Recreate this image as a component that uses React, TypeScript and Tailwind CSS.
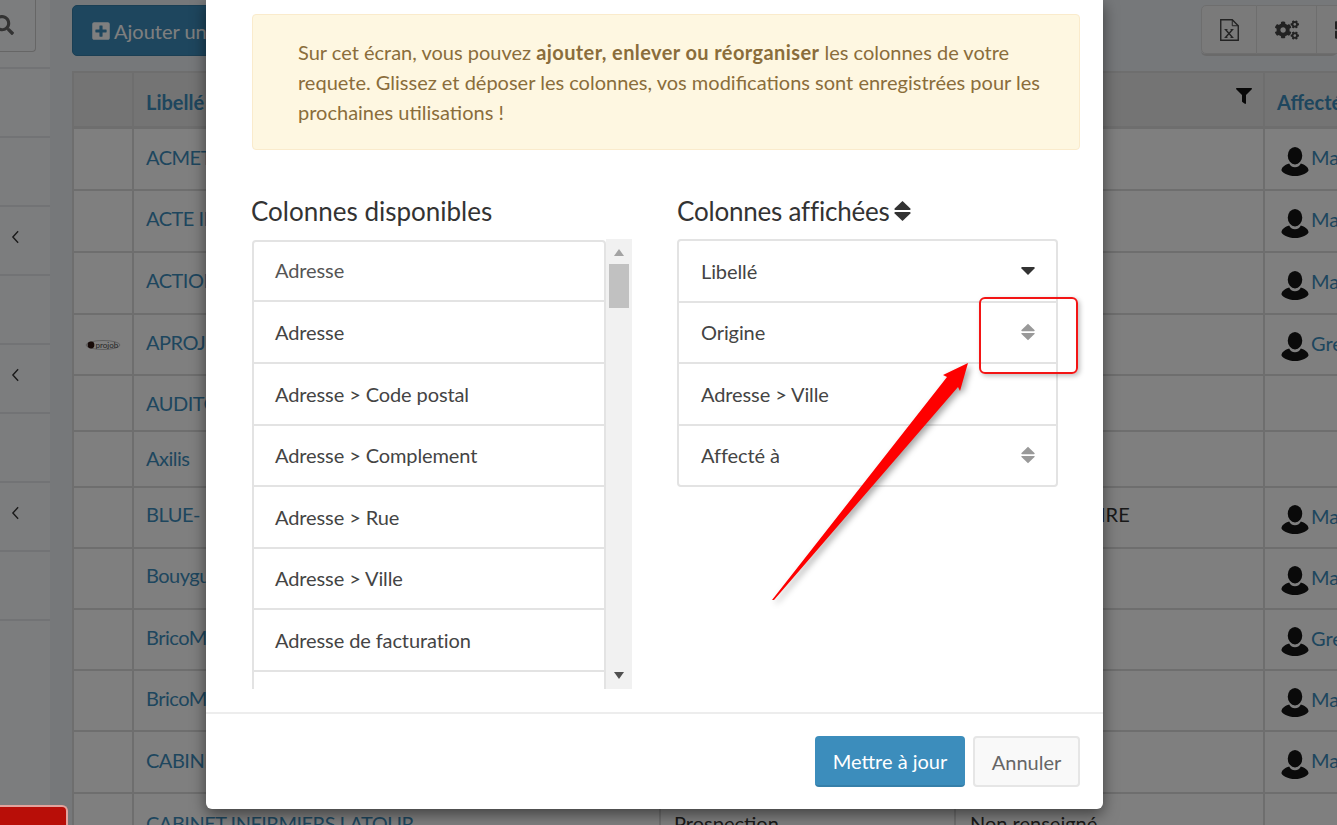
import React from 'react';
import { FaPlusSquare, FaCogs, FaFilter, FaSearch, FaThLarge } from 'react-icons/fa';

interface Row {
  name: string;
  user?: string;
  h: string;
  pad: string;
  logo?: boolean;
  extra?: string;
}

const rows: Row[] = [
  { name: 'ACMET', user: 'Ma', h: 'h-[62px]', pad: 'pb-[4px]' },
  { name: 'ACTE IN', user: 'Ma', h: 'h-[62px]', pad: 'pb-[6px]' },
  { name: 'ACTION', user: 'Ma', h: 'h-[62px]', pad: 'pb-[6px]' },
  { name: 'APROJ', user: 'Gre', h: 'h-[61px]', pad: 'pb-[6px]', logo: true },
  { name: 'AUDITO', h: 'h-[56px]', pad: 'pb-0' },
  { name: 'Axilis', h: 'h-[56px]', pad: 'pb-[2px]' },
  { name: 'BLUE- I', user: 'Ma', h: 'h-[61px]', pad: 'pb-[8px]', extra: 'IRE' },
  { name: 'Bouygu', user: 'Ma', h: 'h-[61px]', pad: 'pb-[8px]' },
  { name: 'BricoM', user: 'Gre', h: 'h-[61px]', pad: 'pb-[6px]' },
  { name: 'BricoM', user: 'Ma', h: 'h-[61px]', pad: 'pb-[6px]' },
  { name: 'CABINE', user: 'Ma', h: 'h-[62px]', pad: 'pb-[4px]' },
];

const available = [
  { label: 'Adresse', cls: 'h-[62px] pb-[2px] rounded-t border-t-2 text-[#555]' },
  { label: 'Adresse', cls: 'h-[62px]' },
  { label: 'Adresse > Code postal', cls: 'h-[61.5px]' },
  { label: 'Adresse > Complement', cls: 'h-[61.5px]' },
  { label: 'Adresse > Rue', cls: 'h-[61.5px]' },
  { label: 'Adresse > Ville', cls: 'h-[61.5px]' },
  { label: 'Adresse de facturation', cls: 'h-[61.5px]' },
  { label: '', cls: 'h-[61.5px]' },
];

const displayed = [
  { label: 'Libellé', icon: 'down' },
  { label: 'Origine', icon: 'sort' },
  { label: 'Adresse > Ville', icon: '' },
  { label: 'Affecté à', icon: 'sort' },
];

const UserIcon = () => (
  <svg viewBox="0 0 28 30" className="w-[28px] h-[29px] shrink-0 text-[#141414]" fill="currentColor">
    <ellipse cx="14" cy="9" rx="7.5" ry="9" />
    <path d="M8 17c1 2 3 4 6 4s5-2 6-4c4 1 8 4 8 7 0 2-7 6-14 6S0 26 0 24c0-3 4-6 8-7z" />
  </svg>
);

const SortIcon = ({ className }: { className: string }) => (
  <svg viewBox="0 0 16 20" className={className} fill="currentColor">
    <path d="M8 0.5 15.4 7.6c.5.6.2 1.4-.7 1.4H1.3C.4 9 .1 8.2.6 7.6z" />
    <path d="M8 19.5.6 12.4C.1 11.8.4 11 1.3 11h13.4c.9 0 1.2.8.7 1.4z" />
  </svg>
);

const ExcelIcon = () => (
  <svg viewBox="0 0 19 22" className="h-[22px] w-[19px]" fill="none" stroke="currentColor">
    <path d="M.75.75h11.5l6 6v14.5H.75z" strokeWidth="1.4" />
    <path d="M12.25.75v6h6" strokeWidth="1" />
    <path d="M5.5 10.5 12.5 18.5M12.5 10.5 5.5 18.5" strokeWidth="1.4" />
    <path d="M4.5 10.5h3M10.5 10.5h3M4.5 18.5h3M10.5 18.5h3" strokeWidth="0.9" />
  </svg>
);

const ThinChevron = () => (
  <svg viewBox="0 0 10 16" className="h-[14px] w-[9px]" fill="none" stroke="#333" strokeWidth="1.6">
    <path d="M8 1.5 2 8l6 6.5" />
  </svg>
);

const Logo = () => (
  <svg viewBox="0 0 36 12" className="w-[36px] h-[12px]">
    <ellipse cx="18" cy="6" rx="17" ry="4.5" fill="none" stroke="#8f8f8f" strokeWidth="0.6" />
    <circle cx="6" cy="6" r="3.4" fill="#2c1410" />
    <text x="10.5" y="8.5" fontSize="8" fill="#4c4c4c" fontFamily="Lato, sans-serif">projob</text>
  </svg>
);

function Background() {
  return (
    <div className="flex h-[825px] w-[1337px] overflow-hidden bg-[#ecf0f5] text-[20px] text-[#333]">
      <div className="w-[50px] shrink-0 bg-[#f9fafc] text-[#444]">
        <div className="h-[68px]">
          <div className="flex h-[53px] w-[36px] items-center overflow-hidden rounded-br border-r border-b border-[#ccc] bg-[#f9fafc] -mt-px">
            <FaSearch className="-ml-[6px] shrink-0 text-[20px] text-[#666]" />
          </div>
        </div>
        {[false, false, true, false, true, false, true, false].map((chev, i) => (
          <div key={i} className="flex h-[69px] items-center justify-center border-t-2 border-[#e4e6ea] pb-[8px] pr-[20px]">
            {chev && <ThinChevron />}
          </div>
        ))}
        <div className="h-[121px] border-t-2 border-[#e4e6ea]" />
      </div>

      <div className="min-w-0 flex-1 pl-[22px] pt-[5px]">
        <div className="flex h-[51px] items-stretch justify-between">
          <button className="flex w-[200px] items-center gap-[3px] rounded-[5px] border border-[#367fa9] bg-[#3c8dbc] pl-[18px] text-[20px] text-white">
            <FaPlusSquare className="text-[20px]" />
            Ajouter un
          </button>
          <div className="flex h-[51px] rounded-[5px] border-b-2 border-[#d5d5d5]">
            <div className="flex w-[56px] items-center justify-center rounded-l-[5px] border border-[#ddd] bg-[#f4f4f4] text-[#444]">
              <ExcelIcon />
            </div>
            <div className="flex w-[60px] items-center justify-center border border-l-0 border-[#ddd] bg-[#f4f4f4] text-[#444]">
              <FaCogs className="text-[24px]" />
            </div>
            <div className="flex w-[20px] items-center justify-start overflow-hidden border-y border-[#ddd] bg-[#f4f4f4] pl-[18px] text-[#444]">
              <FaThLarge className="shrink-0 text-[20px]" />
            </div>
          </div>
        </div>

        <div className="mt-[15px] border-t-2 border-l-2 border-[#ddd] bg-white">
          <div className="flex h-[56px] border-b-[3px] border-[#ddd] bg-[#e8e8e8] font-bold text-[#3c8dbc]">
            <div className="w-[60px] shrink-0 border-r-2 border-[#ddd]" />
            <div className="w-[527px] shrink-0 border-r-2 border-[#ddd] pl-[12px] pt-[14px]">Libellé</div>
            <div className="w-[295px] shrink-0" />
            <div className="flex w-[309px] shrink-0 justify-end border-r-2 border-[#ddd] pr-[11px] pt-[15px]">
              <FaFilter className="text-[16px] text-[#111]" />
            </div>
            <div className="whitespace-nowrap pl-[12px] pt-[14px]">Affecté</div>
          </div>
          {rows.map((row, i) => (
            <div key={i} className={`flex ${row.h} border-b-2 border-[#ddd]`}>
              <div className="flex w-[60px] shrink-0 items-center justify-center border-r-2 border-[#ddd]">
                {row.logo && <Logo />}
              </div>
              <div className={`flex w-[527px] shrink-0 items-center border-r-2 border-[#ddd] ${row.pad} pl-[12px] tracking-[-0.5px] text-[#3c8dbc]`}>{row.name}</div>
              <div className="w-[295px] shrink-0 border-r-2 border-[#ddd]" />
              <div className={`flex w-[309px] shrink-0 items-center border-r-2 border-[#ddd] ${row.pad} pl-[144px]`}>{row.extra}</div>
              <div className="flex items-center gap-[2px] pl-[16px] pt-[4px] text-[#3c8dbc]">
                {row.user && <UserIcon />}
                {row.user && <span className="-mt-[8px]">{row.user}</span>}
              </div>
            </div>
          ))}
          <div className="flex h-[40px]">
            <div className="w-[60px] shrink-0 border-r-2 border-[#ddd]" />
            <div className="w-[527px] shrink-0 whitespace-nowrap border-r-2 border-[#ddd] pl-[12px] pt-[14px] tracking-[-0.5px] text-[#3c8dbc]">CABINET INFIRMIERS LATOUR</div>
            <div className="w-[295px] shrink-0 border-r-2 border-[#ddd] pl-[13px] pt-[14px]">Prospection</div>
            <div className="w-[309px] shrink-0 border-r-2 border-[#ddd] pl-[14px] pt-[14px]">Non renseigné</div>
          </div>
        </div>
      </div>
    </div>
  );
}

function Modal() {
  return (
    <div className="ml-[206px] flex h-[809px] w-[897px] flex-col rounded-b-[6px] bg-white shadow-[0_5px_15px_rgba(0,0,0,0.5)]">
      <div className="flex-1 pl-[46px] pr-[23px] pt-[14px]">
        <div className="h-[136px] rounded border border-[#faebcc] bg-[#fef7e1] pl-[45px] pr-[30px] pt-[22px] text-[20px] leading-[30px] text-[#8a6d3b]">
          Sur cet écran, vous pouvez <b className="tracking-[0.4px]">ajouter, enlever ou réorganiser</b> les colonnes de votre requete. Glissez et déposer les colonnes, vos modifications sont enregistrées pour les prochaines utilisations !
        </div>

        <div className="mt-[43px] flex text-[#444]">
          <div className="w-[425px] shrink-0">
            <h4 className="-ml-px h-[46px] text-[26px] leading-[36px] text-[#333]">Colonnes disponibles</h4>
            <div className="flex h-[450px] w-[380px] overflow-hidden">
              <div className="w-[354px] shrink-0 pt-[1px]">
                {available.map((item, i) => (
                  <div key={i} className={`flex items-center border-x-2 border-b-2 border-[#e3e3e3] pl-[21px] text-[20px] tracking-[-0.1px] ${item.cls}`}>
                    {item.label}
                  </div>
                ))}
              </div>
              <div className="flex h-[450px] w-[26px] shrink-0 flex-col items-center bg-[#f1f1f1]">
                <div className="mt-[10px] h-0 w-0 border-x-[5px] border-b-[7px] border-x-transparent border-b-[#a3a3a3]" />
                <div className="mt-[8px] h-[44px] w-[20px] bg-[#c1c1c1]" />
                <div className="mt-[364px] h-0 w-0 border-x-[5px] border-t-[7px] border-x-transparent border-t-[#505050]" />
              </div>
            </div>
          </div>
          <div className="w-[381px] shrink-0">
            <h4 className="flex h-[46px] items-start gap-[4px] text-[26px] leading-[36px] tracking-[-0.2px] text-[#333]">
              Colonnes affichées
              <SortIcon className="mt-[7px] h-[22px] w-[17px] text-[#333]" />
            </h4>
            <div className="overflow-hidden rounded border-2 border-[#e3e3e3]">
              {displayed.map((item, i) => (
                <div key={i} className={`flex items-center justify-between pl-[22px] pr-[21px] text-[20px] tracking-[-0.1px] ${i < 3 ? 'h-[61.5px] border-b-2 border-[#e3e3e3]' : 'h-[59.5px]'}`}>
                  {item.label}
                  {item.icon === 'down' && (
                    <svg viewBox="0 0 14 8" className="h-[8px] w-[14px] text-[#333]" fill="currentColor">
                      <path d="M7 8 .5 1.4C0 .8.3 0 1.1 0h11.8c.8 0 1.1.8.6 1.4z" />
                    </svg>
                  )}
                  {item.icon === 'sort' && <SortIcon className="h-[18px] w-[14px] text-[#999]" />}
                </div>
              ))}
            </div>
          </div>
        </div>
      </div>
      <div className="flex h-[97px] justify-end gap-[8px] border-t-2 border-[#ededed] pr-[23px] pt-[22px]">
        <button className="h-[51px] w-[150px] rounded border-b-2 border-[#367fa9] bg-[#3c8dbc] text-[20px] text-white">Mettre à jour</button>
        <button className="h-[51px] w-[107px] rounded border-2 border-[#e6e6e6] bg-[#f9f9f9] text-[20px] text-[#666]">Annuler</button>
      </div>
    </div>
  );
}

export default function App() {
  return (
    <div className="relative h-[825px] w-[1337px] overflow-hidden font-['Lato',sans-serif]">
      <Background />
      <div className="absolute inset-0 bg-black/50">
        <Modal />
      </div>
      <div className="absolute bottom-0 left-0 h-[20px] w-[68px] rounded-tr-[6px] border-t-2 border-r-2 border-[#e2a39e] bg-[#b80e08]" />
      <div className="absolute left-[979px] top-[297px] h-[77px] w-[99px] rounded-[6px] border-2 border-[#f31515] shadow-[2px_2px_5px_rgba(0,0,0,0.25)]" />
      <svg className="absolute left-[760px] top-[350px] h-[260px] w-[220px] drop-shadow-[3px_3px_3px_rgba(0,0,0,0.35)]" viewBox="760 350 220 260">
        <polygon points="772,600 774,600 958,387 960,391 968,363 943,375 947,377" fill="#fe0000" />
      </svg>
    </div>
  );
}
